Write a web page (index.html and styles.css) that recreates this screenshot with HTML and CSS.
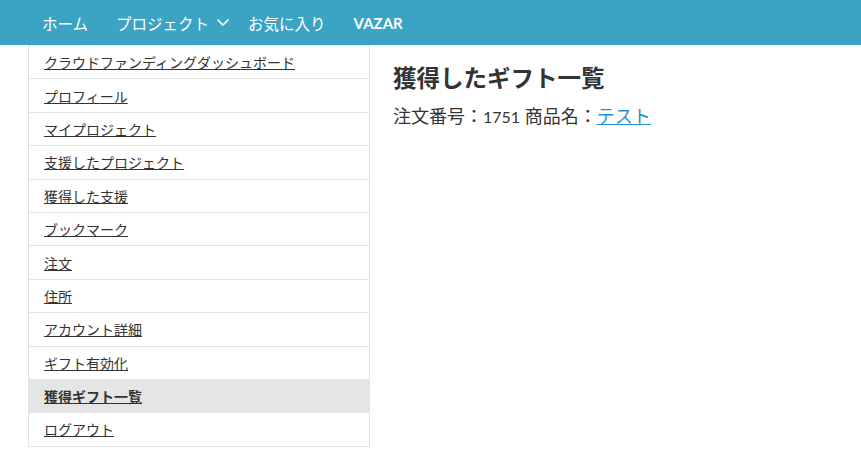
FILE: index.html
```html
<!DOCTYPE html>
<html lang="ja">
<head>
    <meta charset="UTF-8">
    <meta name="viewport" content="width=device-width, initial-scale=1.0">
    <title>獲得ギフト一覧</title>
    <link rel="stylesheet" href="styles.css">
</head>
<body>
    <header class="site-header">
        <nav class="main-nav">
            <a href="#">ホーム</a>
            <a href="#" class="has-sub">プロジェクト
                <svg class="chevron" width="14" height="9" viewBox="0 0 14 9"><path d="M1.5 1.5 L7 7 L12.5 1.5" fill="none" stroke="#fff" stroke-width="1.6"/></svg>
            </a>
            <a href="#">お気に入り</a>
            <a href="#" class="brand">VAZAR</a>
        </nav>
    </header>

    <div class="account">
        <ul class="account-menu">
            <li><a href="#">クラウドファンディングダッシュボード</a></li>
            <li><a href="#">プロフィール</a></li>
            <li><a href="#">マイプロジェクト</a></li>
            <li><a href="#">支援したプロジェクト</a></li>
            <li><a href="#">獲得した支援</a></li>
            <li><a href="#">ブックマーク</a></li>
            <li><a href="#">注文</a></li>
            <li><a href="#">住所</a></li>
            <li><a href="#">アカウント詳細</a></li>
            <li><a href="#">ギフト有効化</a></li>
            <li class="is-active"><a href="#">獲得ギフト一覧</a></li>
            <li><a href="#">ログアウト</a></li>
        </ul>

        <div class="account-content">
            <h2>獲得したギフト一覧</h2>
            <p>注文番号：<span class="num">1751</span> 商品名：<a href="#">テスト</a></p>
        </div>
    </div>
</body>
</html>
```

FILE: styles.css
```css
body {
    margin: 0;
    font-family: Lato, "Noto Sans CJK JP", sans-serif;
    color: #333;
    background: #fff;
}

.site-header {
    background-color: #3ba3c4;
    height: 45px;
}

.main-nav {
    display: flex;
    align-items: center;
    height: 45px;
    padding-left: 42px;
}

.main-nav a {
    color: #fff;
    text-decoration: none;
    font-size: 15.5px;
    margin-right: 28px;
    display: flex;
    align-items: center;
}

.main-nav .has-sub {
    margin-right: 18px;
}

.chevron {
    margin-left: 7px;
}

.main-nav .brand {
    font-weight: bold;
    font-size: 15px;
}

.account {
    display: flex;
    align-items: flex-start;
    padding-left: 28px;
}

.account-menu {
    list-style: none;
    margin: 0;
    padding: 0;
    width: 340px;
    border: 1px solid #e2e2e2;
    border-top: none;
}

.account-menu li {
    height: 32.4px;
    border-top: 1px solid #e2e2e2;
    padding-left: 15px;
    display: flex;
    align-items: center;
}

.account-menu li:first-child {
    border-top: 1px solid #e9e9e9;
}

.account-menu a {
    color: #333;
    font-size: 14px;
    text-decoration: underline;
}

.account-menu .is-active {
    background-color: #e5e5e5;
}

.account-menu .is-active a {
    font-weight: bold;
}

.account-content {
    padding-left: 23px;
}

.account-content h2 {
    font-size: 23.5px;
    font-weight: bold;
    margin: 15px 0 8px;
}

.account-content p {
    font-size: 18px;
    margin: 0;
}

.account-content .num {
    font-size: 16px;
}

.account-content p a {
    color: #1e8fd0;
}
```
